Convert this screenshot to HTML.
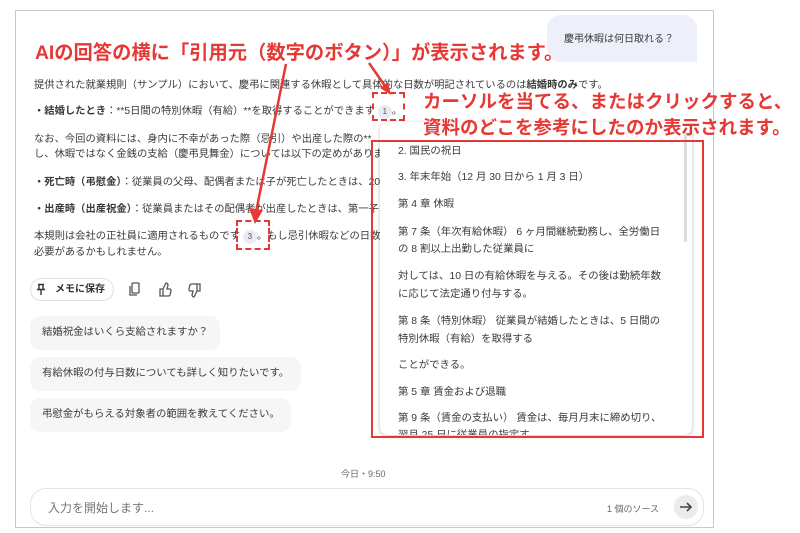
<!DOCTYPE html>
<html><head><meta charset="utf-8"><style>
*{box-sizing:border-box;margin:0;padding:0}
body{width:800px;height:533px;background:#fff;position:relative;overflow:hidden;font-family:"Liberation Sans","Noto Sans CJK JP",sans-serif;color:#333}
.a{position:absolute;white-space:nowrap}
.frame{position:absolute;left:15px;top:10px;width:699px;height:518px;border:1px solid #c8c8c8}
.t{font-size:10.4px;color:#3a3a3a}
.b{font-size:10.3px;color:#3a3a3a}
.red{color:#e53935;font-weight:bold}
.dash{position:absolute;border:2px dashed #e53935}
.cite{display:inline-block;width:14px;height:14px;border-radius:7px;background:#e9ecf6;font-size:8px;text-align:center;line-height:14px;color:#555}
.pop{position:absolute;left:380px;top:122px;width:312px;height:313px;background:#fff;border-radius:8px;box-shadow:0 1px 4px rgba(0,0,0,.25);overflow:hidden}
.sug{position:absolute;left:30px;height:34px;background:#f6f6f7;border-radius:10px;font-size:10.4px;padding-left:12px;line-height:34px;color:#3a3a3a;white-space:nowrap}
</style></head><body>
<div class="frame"></div>
<div class="a" style="left:547px;top:15px;width:150px;height:47px;background:#edf0fa;border-radius:14px 14px 0 14px"></div>
<div class="a t" style="left:564px;top:30px;font-size:10px">慶弔休暇は何日取れる？</div>
<div class="a red" style="left:35px;top:37px;font-size:19.3px">AIの回答の横に「引用元（数字のボタン）」が表示されます。</div>

<div class="a b" style="left:34px;top:76px">提供された就業規則（サンプル）において、慶弔に関連する休暇として具体的な日数が明記されているのは<b>結婚時のみ</b>です。</div>
<div class="a b" style="left:34px;top:102px"><b>・結婚したとき</b>：**5日間の特別休暇（有給）**を取得することができます <span class="cite">1</span>。</div>
<div class="a b" style="left:34px;top:130px">なお、今回の資料には、身内に不幸があった際（忌引）や出産した際の**</div>
<div class="a b" style="left:34px;top:145px">し、休暇ではなく金銭の支給（慶弔見舞金）については以下の定めがあります</div>
<div class="a b" style="left:34px;top:173px"><b>・死亡時（弔慰金）</b>：従業員の父母、配偶者または子が死亡したときは、20</div>
<div class="a b" style="left:34px;top:200px"><b>・出産時（出産祝金）</b>：従業員またはその配偶者が出産したときは、第一子に</div>
<div class="a b" style="left:34px;top:227px">本規則は会社の正社員に適用されるものです <span class="cite">3</span>。もし忌引休暇などの日数</div>
<div class="a b" style="left:34px;top:243px">必要があるかもしれません。</div>
<div class="dash" style="left:372px;top:92px;width:33px;height:29px"></div>
<div class="dash" style="left:236px;top:220px;width:34px;height:30px"></div>

<div class="pop">
<div style="position:absolute;left:304px;top:10px;width:3px;height:110px;background:#ddd;border-radius:2px"></div>
<div class="a t" style="left:18px;top:20px">2. 国民の祝日</div>
<div class="a t" style="left:18px;top:46px">3. 年末年始（12 月 30 日から 1 月 3 日）</div>
<div class="a t" style="left:18px;top:73px">第 4 章 休暇</div>
<div class="a t" style="left:18px;top:101px">第 7 条（年次有給休暇） 6 ヶ月間継続勤務し、全労働日</div>
<div class="a t" style="left:18px;top:118px">の 8 割以上出勤した従業員に</div>
<div class="a t" style="left:18px;top:145px">対しては、10 日の有給休暇を与える。その後は勤続年数</div>
<div class="a t" style="left:18px;top:163px">に応じて法定通り付与する。</div>
<div class="a t" style="left:18px;top:190px">第 8 条（特別休暇） 従業員が結婚したときは、5 日間の</div>
<div class="a t" style="left:18px;top:208px">特別休暇（有給）を取得する</div>
<div class="a t" style="left:18px;top:234px">ことができる。</div>
<div class="a t" style="left:18px;top:261px">第 5 章 賃金および退職</div>
<div class="a t" style="left:18px;top:287px">第 9 条（賃金の支払い） 賃金は、毎月月末に締め切り、</div>
<div class="a t" style="left:18px;top:304px">翌月 25 日に従業員の指定す</div>
</div>
<div class="a" style="left:371px;top:140px;width:333px;height:298px;border:2px solid #e53935"></div>

<svg class="a" style="left:0;top:0" width="800" height="533">
<line x1="286" y1="64" x2="256" y2="212" stroke="#e53935" stroke-width="2.5"/>
<polygon points="249,208 255,224 263,210" fill="#e53935"/>
<line x1="369" y1="63" x2="385" y2="86" stroke="#e53935" stroke-width="2.5"/>
<polygon points="380,88 391,95 388,82" fill="#e53935"/>
</svg>

<div class="a red" style="left:423px;top:88px;font-size:18.5px">カーソルを当てる、またはクリックすると、</div>
<div class="a red" style="left:423px;top:114px;font-size:18.5px">資料のどこを参考にしたのか表示されます。</div>

<div class="a" style="left:30px;top:278px;width:84px;height:23px;border:1px solid #dde0ea;border-radius:12px;font-size:10px;line-height:21px;padding-left:24px;color:#333;font-weight:bold">メモに保存</div>
<svg class="a" style="left:36px;top:283px" width="10" height="13" fill="none" stroke="#333" stroke-width="1.4"><path d="M2 1.5h6M3 1.5v5M7 1.5v5M1 6.5h8M5 6.5v5.5"/></svg>
<svg class="a" style="left:126px;top:280px" width="85" height="20" fill="none" stroke="#555" stroke-width="1.3">
<rect x="6" y="3" width="7" height="10" rx="1"/><path d="M4 6v9h7"/>
<path d="M34 9v7h3V9zM37 9l3-6c1 0 2 1 2 2l-1 4h3c1 0 1 1 1 2l-1 4c0 1-1 1-2 1h-5"/>
<path d="M74 11V4h-3v7zM71 11l-3 6c-1 0-2-1-2-2l1-4h-3c-1 0-1-1-1-2l1-4c0-1 1-1 2-1h5"/>
</svg>

<div class="sug" style="top:316px;width:190px">結婚祝金はいくら支給されますか？</div>
<div class="sug" style="top:357px;width:271px">有給休暇の付与日数についても詳しく知りたいです。</div>
<div class="sug" style="top:398px;width:261px">弔慰金がもらえる対象者の範囲を教えてください。</div>

<div class="a" style="left:341px;top:467px;font-size:9px;color:#666">今日・9:50</div>
<div class="a" style="left:30px;top:488px;width:674px;height:38px;border:1px solid #e2e4ea;border-radius:16px"></div>
<div class="a" style="left:48px;top:499px;font-size:12px;color:#777">入力を開始します...</div>
<div class="a" style="left:607px;top:502px;font-size:9px;color:#666">1 個のソース</div>
<div class="a" style="left:674px;top:495px;width:24px;height:24px;border-radius:12px;background:#ececec"></div>
<svg class="a" style="left:678px;top:499px" width="16" height="16" fill="none" stroke="#444" stroke-width="1.6"><path d="M2 8h11M9 4l4 4-4 4"/></svg>
</body></html>
